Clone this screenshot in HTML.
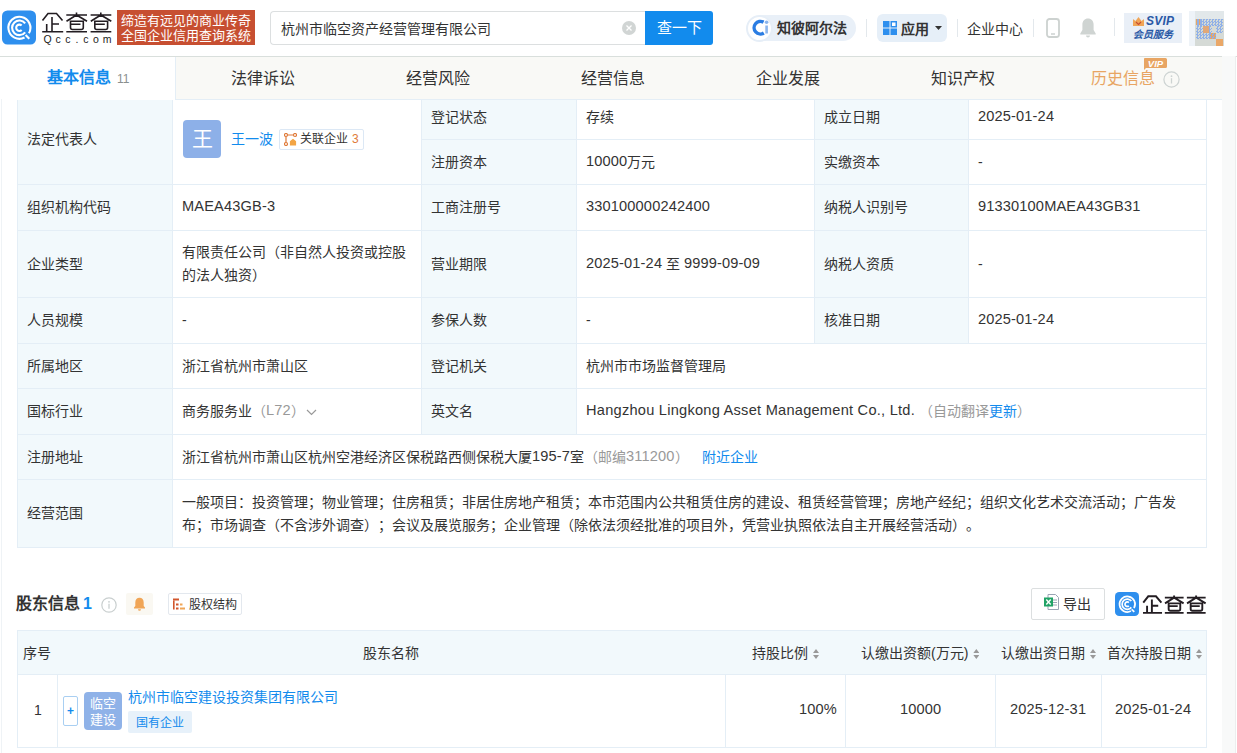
<!DOCTYPE html>
<html lang="zh-CN"><head><meta charset="utf-8">
<style>
*{box-sizing:border-box;margin:0;padding:0}
html,body{width:1237px;height:753px;overflow:hidden;background:#fff}
body{position:relative;font-family:"Liberation Sans",sans-serif;color:#333;font-size:14px;text-spacing-trim:space-all}
.a{position:absolute;white-space:nowrap}
.c{position:absolute;display:flex;align-items:center;padding-left:9px;white-space:nowrap;font-size:14px;line-height:23px;color:#333}
.n{letter-spacing:0.15px;font-size:14.6px;position:relative;top:-1px}
.rel .n{font-size:12px;top:0;letter-spacing:0}
.blue{color:#128bed}
.gray{color:#999}
.av{display:inline-block;width:38px;height:38px;border-radius:4px;background:#8db0e8;color:#fff;font-size:21px;line-height:38px;text-align:center;margin-left:1px}
.rel{display:inline-flex;align-items:center;height:21px;border:1px solid #dce8f5;border-radius:2px;padding:0 4px 0 4px;margin-left:6px;font-size:12px;color:#333;letter-spacing:0}
.srt{display:inline-block;width:6px;height:10px;margin-left:5px;vertical-align:-1px;background:linear-gradient(#999,#999) no-repeat;clip-path:polygon(50% 0,100% 40%,0 40%,0 60%,100% 60%,50% 100%,0 60%,0 40%);}
.tab{position:absolute;top:0;height:43px;width:175px;text-align:center;font-size:16px;line-height:43px;color:#333}
</style></head><body>
<!-- header -->
<div class="a" style="left:0;top:56px;width:1237px;height:1px;background:#d9dfdc"></div>
<svg class="a" style="left:2px;top:10px" width="34" height="35" viewBox="0 0 34 34"><rect width="34" height="34" rx="5.5" fill="#2e8fee"/><g fill="none" stroke="#fff" stroke-width="2.1"><path d="M22.56 27.01 A11 11 0 1 1 26.93 22.8"/><path d="M23.6 24.5L27.3 28.2"/><path d="M23.15 21.79 A7.3 7.3 0 1 1 23.15 12.81"/><path d="M19.66 19.56 A3.2 3.2 0 1 1 19.66 15.04"/></g></svg>
<svg class="a" style="left:40px;top:10px" width="75" height="35" viewBox="0 0 75 35"><g fill="none" stroke="#231d22" stroke-width="1.6"><path d="M2.5 10.5L8 3.5h8.5l6 7"/><path d="M12 7v15M12 14h7M6.7 14v8M2.2 21.8h21"/><path d="M26.3 5h20.7M36.5 2.5v3M36.5 5l-10 6.3M36.5 5l10.5 6.3M30.5 11.3h12.8v6.2a2 2 0 0 1-2 2h-8.8a2 2 0 0 1-2-2zM30.5 14.3h10M26.3 21.8h20.7"/><path d="M50.6 5h20.7M60.8 2.5v3M60.8 5l-10 6.3M60.8 5l10.5 6.3M54.8 11.3h12.8v6.2a2 2 0 0 1-2 2h-8.8a2 2 0 0 1-2-2zM54.8 14.3h10M50.6 21.8h20.7"/></g><text font-family="Liberation Sans" font-size="10.5" fill="#231d22" y="33"><tspan x="3.6">Q</tspan><tspan x="15.5">c</tspan><tspan x="25.3">c</tspan><tspan x="35.6">.</tspan><tspan x="43.2">c</tspan><tspan x="52.9">o</tspan><tspan x="62.8">m</tspan></text></svg>
<div class="a" style="left:117px;top:10px;width:138px;height:35px;background:#c74f31;color:#fff;font-size:13px;line-height:14.5px;padding:4px 0 0 4px;letter-spacing:0">缔造有远见的商业传奇<br>全国企业信用查询系统</div>
<div class="a" style="left:270px;top:11px;width:376px;height:34px;border:1px solid #dcdfe0;border-right:none;border-radius:4px 0 0 4px;background:#fff"></div>
<div class="a" style="left:281px;top:18px;font-size:14px;line-height:22px;color:#333">杭州市临空资产经营管理有限公司</div>
<svg class="a" style="left:622px;top:21px" width="14" height="14" viewBox="0 0 14 14"><circle cx="7" cy="7" r="7" fill="#d1d5d4"/><path d="M4.5 4.5l5 5M9.5 4.5l-5 5" stroke="#fff" stroke-width="1.3"/></svg>
<div class="a" style="left:645px;top:11px;width:68px;height:34px;background:#128bed;border-radius:0 3px 3px 0;color:#fff;font-size:15px;line-height:34px;text-align:center">查一下</div>
<div class="a" style="left:750px;top:15px;width:106px;height:26px;border-radius:13px;background:#e9f0f8"></div>
<div class="a" style="left:746px;top:15px;width:27px;height:27px;border-radius:50%;background:#fff;border:2px solid #e6eef7"></div>
<svg class="a" style="left:752px;top:19px" width="17" height="17" viewBox="0 0 17 17"><path d="M11.5 3.2A6.3 6.3 0 1 0 11.8 14" fill="none" stroke="#2b7de3" stroke-width="3.4"/><circle cx="14.6" cy="3.3" r="1.8" fill="#8cb5ec"/><path d="M14.6 6.5v8" stroke="#8cb5ec" stroke-width="2.6"/></svg>
<div class="a" style="left:777px;top:17px;font-size:14px;line-height:22px;font-weight:bold;color:#333">知彼阿尔法</div>
<div class="a" style="left:866px;top:19px;width:1px;height:18px;background:#e3e8ec"></div>
<div class="a" style="left:877px;top:14px;width:70px;height:28px;border-radius:6px;background:#e6eff8"></div>
<svg class="a" style="left:883px;top:21px" width="14" height="14" viewBox="0 0 14 14"><rect x="0" y="0" width="6.5" height="6.5" fill="#2e8fee"/><rect x="0" y="7.5" width="6.5" height="6.5" fill="#2e8fee"/><rect x="7.5" y="7.5" width="6.5" height="6.5" fill="#2e8fee"/><rect x="7.5" y="0" width="6.5" height="6.5" fill="#2e8fee"/><rect x="9" y="1.5" width="3.5" height="3.5" fill="#fff"/></svg>
<div class="a" style="left:901px;top:18px;font-size:14px;line-height:22px;font-weight:bold;color:#333">应用</div>
<svg class="a" style="left:935px;top:26px" width="7" height="4" viewBox="0 0 7 4"><path d="M0 0h7L3.5 4z" fill="#333"/></svg>
<div class="a" style="left:957px;top:19px;width:1px;height:18px;background:#e3e8ec"></div>
<div class="a" style="left:967px;top:18px;font-size:14px;line-height:22px;color:#333">企业中心</div>
<div class="a" style="left:1033px;top:19px;width:1px;height:18px;background:#e3e8ec"></div>
<svg class="a" style="left:1046px;top:18px" width="14" height="20" viewBox="0 0 14 20"><rect x="1" y="1" width="12" height="18" rx="2.5" fill="none" stroke="#cdd2d0" stroke-width="1.8"/><path d="M5 16h4" stroke="#cdd2d0" stroke-width="1.5"/></svg>
<svg class="a" style="left:1080px;top:18px" width="16" height="20" viewBox="0 0 16 20"><path d="M8 0.5c-3.3 0-5.6 2.6-5.6 6v5.5L0.3 15.5v1h15.4v-1L13.6 12V6.5C13.6 3.1 11.3 0.5 8 0.5z" fill="#cfd4d2"/><path d="M6 17.5h4a2 2 0 0 1-4 0z" fill="#cfd4d2"/></svg>
<div class="a" style="left:1114px;top:18px;width:1px;height:18px;background:#e3e8ec"></div>
<div class="a" style="left:1124px;top:13px;width:58px;height:30px;background:#e9eff7"></div>
<svg class="a" style="left:1133px;top:17px" width="11" height="9" viewBox="0 0 11 9"><path d="M0 2l2.5 2L5.5 0l3 4L11 2v7H0z" fill="#f0a557"/><path d="M3 5l2.5 2.5L8 5" stroke="#c74f31" stroke-width="1.2" fill="none"/></svg>
<div class="a" style="left:1146px;top:14px;font-size:12px;line-height:15px;font-weight:bold;font-style:italic;color:#2a58a6;letter-spacing:0.2px">SVIP</div>
<div class="a" style="left:1133px;top:28px;font-size:10px;line-height:13px;font-weight:bold;font-style:italic;color:#2a58a6">会员服务</div>
<div class="a" style="left:1189px;top:11px;width:6px;height:35px;background:#eef3f8"></div>
<div class="a" style="left:1195px;top:11px;width:29px;height:8px;background:#e2e8ea"></div>
<div class="a" style="left:1195px;top:19px;width:29px;height:27px;background:#d5dad6"></div>
<div class="a" style="left:1196px;top:19px;width:27px;height:7px;background:repeating-conic-gradient(#8fb0e8 0 25%,#d5dad6 0 50%) 0 0/3px 3px"></div>
<div class="a" style="left:1196px;top:26px;width:16px;height:13px;background:repeating-conic-gradient(#8fb0e8 0 25%,#d5dad6 0 50%) 0 0/3px 3px"></div>
<div class="a" style="left:1216px;top:26px;width:7px;height:7px;background:repeating-conic-gradient(#8fb0e8 0 25%,#d5dad6 0 50%) 0 0/3px 3px"></div>
<div class="a" style="left:1196px;top:19px;width:6px;height:6px;background:repeating-linear-gradient(90deg,#e8a563 0 1.5px,#8fb0e8 1.5px 3px)"></div>
<div class="a" style="left:1203px;top:26px;width:6px;height:7px;background:#e0a878"></div>
<div class="a" style="left:1210px;top:33px;width:6px;height:6px;background:repeating-conic-gradient(#e8a563 0 25%,#8fb0e8 0 50%) 0 0/3px 3px"></div>
<div class="a" style="left:1216px;top:39px;width:7px;height:7px;background:#eaa767"></div>
<!-- tabs -->
<div class="a" style="left:0;top:57px;width:1222px;height:43px;background:#f9f9f6;border-bottom:1px solid #e4eef6"></div>
<div class="a" style="left:0;top:57px;width:176px;height:43px;background:#fff;border-right:1px solid #e4eef6"></div>
<div class="a" style="left:47px;top:66px;font-size:16px;line-height:24px;font-weight:bold;color:#128bed">基本信息<span style="font-size:12px;font-weight:normal;color:#8a8f8f;margin-left:6px">11</span></div>
<div class="a" style="left:0;top:57px;width:1222px;height:43px">
  <div class="tab" style="left:175px">法律诉讼</div>
  <div class="tab" style="left:350px">经营风险</div>
  <div class="tab" style="left:525px">经营信息</div>
  <div class="tab" style="left:700px">企业发展</div>
  <div class="tab" style="left:875px">知识产权</div>
</div>
<div class="a" style="left:1091px;top:67px;font-size:16px;line-height:24px;color:#e8a563">历史信息</div>
<svg class="a" style="left:1143px;top:58px" width="24" height="12" viewBox="0 0 24 12"><path d="M1.5 0h21a1.5 1.5 0 0 1 1.5 1.5v7a1.5 1.5 0 0 1-1.5 1.5H3L1 12V1.5A1.5 1.5 0 0 1 1.5 0z" fill="#e8a563"/><text x="12.5" y="8.6" font-family="Liberation Sans" font-size="9.5" font-weight="bold" font-style="italic" fill="#fff" text-anchor="middle">VIP</text></svg>
<svg class="a" style="left:1163px;top:71px" width="17" height="17" viewBox="0 0 17 17"><circle cx="8.5" cy="8.5" r="7.6" fill="none" stroke="#cdd3d2" stroke-width="1.2"/><circle cx="8.5" cy="5.2" r="0.9" fill="#cdd3d2"/><path d="M8.5 7.2v5.3" stroke="#cdd3d2" stroke-width="1.3"/></svg>
<!-- side -->
<div class="a" style="left:1px;top:99px;width:1px;height:654px;background:#eff3f6"></div>
<div class="a" style="left:1222px;top:56px;width:13px;height:697px;background:#f8f9f9"></div>
<div class="a" style="left:1235px;top:56px;width:1px;height:697px;background:#eceeee"></div>
<div class="a" style="left:17px;top:100px;width:155px;height:447px;background:#f2f9fc"></div>
<div class="a" style="left:421px;top:100px;width:155px;height:334px;background:#f2f9fc"></div>
<div class="a" style="left:814px;top:100px;width:154px;height:243px;background:#f2f9fc"></div>
<div class="a" style="left:421px;top:139px;width:786px;height:1px;background:#e4eef6"></div>
<div class="a" style="left:17px;top:184px;width:1190px;height:1px;background:#e4eef6"></div>
<div class="a" style="left:17px;top:230px;width:1190px;height:1px;background:#e4eef6"></div>
<div class="a" style="left:17px;top:297px;width:1190px;height:1px;background:#e4eef6"></div>
<div class="a" style="left:17px;top:343px;width:1190px;height:1px;background:#e4eef6"></div>
<div class="a" style="left:17px;top:388px;width:1190px;height:1px;background:#e4eef6"></div>
<div class="a" style="left:17px;top:434px;width:1190px;height:1px;background:#e4eef6"></div>
<div class="a" style="left:17px;top:479px;width:1190px;height:1px;background:#e4eef6"></div>
<div class="a" style="left:17px;top:547px;width:1190px;height:1px;background:#e4eef6"></div>
<div class="a" style="left:17px;top:100px;width:1px;height:448px;background:#e4eef6"></div>
<div class="a" style="left:1206px;top:100px;width:1px;height:448px;background:#e4eef6"></div>
<div class="a" style="left:172px;top:100px;width:1px;height:448px;background:#e4eef6"></div>
<div class="a" style="left:421px;top:99px;width:1px;height:336px;background:#e4eef6"></div>
<div class="a" style="left:576px;top:99px;width:1px;height:336px;background:#e4eef6"></div>
<div class="a" style="left:814px;top:99px;width:1px;height:245px;background:#e4eef6"></div>
<div class="a" style="left:968px;top:99px;width:1px;height:245px;background:#e4eef6"></div>
<div class="c" style="left:18px;top:100px;width:154px;height:84px;padding-bottom:6px"><div>法定代表人</div></div>
<div class="c" style="left:173px;top:100px;width:248px;height:84px;padding-bottom:6px"><span class="av">王</span><span class="blue" style="margin-left:10px">王一波</span><span class="rel"><svg width="13" height="13" viewBox="0 0 13 13" style="margin-right:3px"><g fill="none" stroke="#e07b3a" stroke-width="1.2"><circle cx="2" cy="2" r="1.5"/><circle cx="11" cy="2" r="1.5"/><circle cx="2" cy="11" r="1.5"/><path d="M3.5 2h6M2 3.5v6"/><path d="M6.5 12V8.5l2.5-2 2.5 2V12z" fill="#f3a545" stroke="#f3a545"/></g></svg>关联企业<span style="color:#e07b3a;margin-left:4px"><span class="n">3</span></span></span></div>
<div class="c" style="left:422px;top:100px;width:154px;height:39px;align-items:flex-start;padding-top:6px"><div>登记状态</div></div>
<div class="c" style="left:577px;top:100px;width:237px;height:39px;align-items:flex-start;padding-top:6px"><div>存续</div></div>
<div class="c" style="left:815px;top:100px;width:153px;height:39px;align-items:flex-start;padding-top:6px"><div>成立日期</div></div>
<div class="c" style="left:969px;top:100px;width:237px;height:39px;align-items:flex-start;padding-top:6px"><div><span class="n">2025-01-24</span></div></div>
<div class="c" style="left:422px;top:140px;width:154px;height:44px;"><div>注册资本</div></div>
<div class="c" style="left:577px;top:140px;width:237px;height:44px;"><div><span class="n">10000</span>万元</div></div>
<div class="c" style="left:815px;top:140px;width:153px;height:44px;"><div>实缴资本</div></div>
<div class="c" style="left:969px;top:140px;width:237px;height:44px;"><div>-</div></div>
<div class="c" style="left:18px;top:185px;width:154px;height:45px;"><div>组织机构代码</div></div>
<div class="c" style="left:173px;top:185px;width:248px;height:45px;"><div><span class="n">MAEA43GB-3</span></div></div>
<div class="c" style="left:422px;top:185px;width:154px;height:45px;"><div>工商注册号</div></div>
<div class="c" style="left:577px;top:185px;width:237px;height:45px;"><div><span class="n">330100000242400</span></div></div>
<div class="c" style="left:815px;top:185px;width:153px;height:45px;"><div>纳税人识别号</div></div>
<div class="c" style="left:969px;top:185px;width:237px;height:45px;"><div><span class="n">91330100MAEA43GB31</span></div></div>
<div class="c" style="left:18px;top:231px;width:154px;height:66px;"><div>企业类型</div></div>
<div class="c" style="left:173px;top:231px;width:248px;height:66px;white-space:normal"><div>有限责任公司（非自然人投资或控股<br>的法人独资）</div></div>
<div class="c" style="left:422px;top:231px;width:154px;height:66px;"><div>营业期限</div></div>
<div class="c" style="left:577px;top:231px;width:237px;height:66px;"><div><span class="n">2025-01-24</span> 至 <span class="n">9999-09-09</span></div></div>
<div class="c" style="left:815px;top:231px;width:153px;height:66px;"><div>纳税人资质</div></div>
<div class="c" style="left:969px;top:231px;width:237px;height:66px;"><div>-</div></div>
<div class="c" style="left:18px;top:298px;width:154px;height:45px;"><div>人员规模</div></div>
<div class="c" style="left:173px;top:298px;width:248px;height:45px;"><div>-</div></div>
<div class="c" style="left:422px;top:298px;width:154px;height:45px;"><div>参保人数</div></div>
<div class="c" style="left:577px;top:298px;width:237px;height:45px;"><div>-</div></div>
<div class="c" style="left:815px;top:298px;width:153px;height:45px;"><div>核准日期</div></div>
<div class="c" style="left:969px;top:298px;width:237px;height:45px;"><div><span class="n">2025-01-24</span></div></div>
<div class="c" style="left:18px;top:344px;width:154px;height:44px;"><div>所属地区</div></div>
<div class="c" style="left:173px;top:344px;width:248px;height:44px;"><div>浙江省杭州市萧山区</div></div>
<div class="c" style="left:422px;top:344px;width:154px;height:44px;"><div>登记机关</div></div>
<div class="c" style="left:577px;top:344px;width:629px;height:44px;"><div>杭州市市场监督管理局</div></div>
<div class="c" style="left:18px;top:389px;width:154px;height:45px;"><div>国标行业</div></div>
<div class="c" style="left:173px;top:389px;width:248px;height:45px;"><div>商务服务业<span class="gray">（<span class="n">L72</span>）</span><svg width="11" height="7" viewBox="0 0 11 7" style="margin-left:1px"><path d="M1 1l4.5 4.5 4.5-4.5" fill="none" stroke="#999" stroke-width="1.2"/></svg></div></div>
<div class="c" style="left:422px;top:389px;width:154px;height:45px;"><div>英文名</div></div>
<div class="c" style="left:577px;top:389px;width:629px;height:45px;"><div><span class="n" style="letter-spacing:0.25px">Hangzhou Lingkong Asset Management Co., Ltd.</span> <span class="gray">（自动翻译</span><span class="blue">更新</span><span class="gray">）</span></div></div>
<div class="c" style="left:18px;top:435px;width:154px;height:44px;"><div>注册地址</div></div>
<div class="c" style="left:173px;top:435px;width:1033px;height:44px;"><div>浙江省杭州市萧山区杭州空港经济区保税路西侧保税大厦<span class="n">195-7</span>室<span class="gray">（邮编<span class="n">311200</span>）</span><span class="blue" style="margin-left:13px">附近企业</span></div></div>
<div class="c" style="left:18px;top:480px;width:154px;height:67px;"><div>经营范围</div></div>
<div class="c" style="left:173px;top:480px;width:1033px;height:67px;"><div>一般项目：投资管理；物业管理；住房租赁；非居住房地产租赁；本市范围内公共租赁住房的建设、租赁经营管理；房地产经纪；组织文化艺术交流活动；广告发<br>布；市场调查（不含涉外调查）；会议及展览服务；企业管理（除依法须经批准的项目外，凭营业执照依法自主开展经营活动）。</div></div>
<!-- shareholder section -->
<div class="a" style="left:16px;top:592px;font-size:16px;line-height:24px;font-weight:bold;color:#333">股东信息<span style="color:#128bed;margin-left:3px">1</span></div>
<svg class="a" style="left:101px;top:597px" width="16" height="16" viewBox="0 0 16 16"><circle cx="8" cy="8" r="7.2" fill="none" stroke="#c9cfcf" stroke-width="1.2"/><circle cx="8" cy="4.8" r="0.9" fill="#c9cfcf"/><path d="M8 6.8v5" stroke="#c9cfcf" stroke-width="1.3"/></svg>
<div class="a" style="left:126px;top:593px;width:27px;height:22px;background:#faf8f2;border-radius:2px"></div>
<svg class="a" style="left:133px;top:597px" width="13" height="14" viewBox="0 0 13 14"><path d="M6.5 0.8c-2.6 0-4.2 2-4.2 4.6v3.6L1 10.6v0.8h11v-0.8L10.7 9V5.4c0-2.6-1.6-4.6-4.2-4.6z" fill="#f0a557"/><path d="M5 12.2h3a1.5 1.5 0 0 1-3 0z" fill="#f0a557"/></svg>
<div class="a" style="left:168px;top:593px;width:74px;height:22px;border:1px solid #e3e8ee;border-radius:2px"></div>
<svg class="a" style="left:173px;top:598px" width="12" height="12" viewBox="0 0 12 12"><g fill="#d2562d"><rect x="0" y="0.5" width="6" height="2"/><rect x="0" y="2.5" width="1.6" height="9"/><rect x="3" y="5.5" width="2.5" height="2"/><rect x="7" y="5.5" width="2.5" height="2" fill="#f0a557"/><rect x="3" y="9.5" width="2.5" height="2"/><rect x="7" y="9.5" width="5" height="2" fill="#f0a557"/></g></svg>
<div class="a" style="left:189px;top:594px;font-size:12px;line-height:23px;color:#333">股权结构</div>

<div class="a" style="left:1031px;top:588px;width:74px;height:32px;border:1px solid #dcdfe0;border-radius:2px;background:#fff"></div>
<svg class="a" style="left:1044px;top:594px" width="15" height="16" viewBox="0 0 15 16"><path d="M4 0.5h7.5l3 3v12h-10.5z" fill="#fff" stroke="#9aa4b4" stroke-width="1"/><g stroke="#9aa4b4" stroke-width="1"><path d="M9 6h4M9 8.5h4M9 11h4"/></g><rect x="0" y="3.5" width="9" height="9" fill="#21a366"/><path d="M2.3 5.5l4.4 5M6.7 5.5l-4.4 5" stroke="#fff" stroke-width="1.4"/></svg>
<div class="a" style="left:1063px;top:593px;font-size:14px;line-height:22px;color:#333">导出</div>
<svg class="a" style="left:1115px;top:592px" width="24" height="24" viewBox="0 0 34 34"><rect width="34" height="34" rx="6" fill="#2e8fee"/><g fill="none" stroke="#fff" stroke-width="2.4"><path d="M22.56 27.01 A11 11 0 1 1 26.93 22.8"/><path d="M23.6 24.5L27.3 28.2"/><path d="M23.15 21.79 A7.3 7.3 0 1 1 23.15 12.81"/><path d="M19.66 19.56 A3.2 3.2 0 1 1 19.66 15.04"/></g></svg>
<svg class="a" style="left:1141px;top:593px" width="68" height="22" viewBox="0 0 75 24"><g fill="none" stroke="#231d22" stroke-width="2.1"><path d="M2.5 10.5L8 3.5h8.5l6 7"/><path d="M12 7v15M12 14h7M6.7 14v8M2.2 21.8h21"/><path d="M26.3 5h20.7M36.5 2.5v3M36.5 5l-10 6.3M36.5 5l10.5 6.3M30.5 11.3h12.8v6.2a2 2 0 0 1-2 2h-8.8a2 2 0 0 1-2-2zM30.5 14.3h10M26.3 21.8h20.7"/><path d="M50.6 5h20.7M60.8 2.5v3M60.8 5l-10 6.3M60.8 5l10.5 6.3M54.8 11.3h12.8v6.2a2 2 0 0 1-2 2h-8.8a2 2 0 0 1-2-2zM54.8 14.3h10M50.6 21.8h20.7"/></g></svg>

<div class="a" style="left:17px;top:630px;width:1190px;height:45px;background:#f2f9fc;border:1px solid #e4eef6"></div>
<div class="a" style="left:17px;top:674px;width:1190px;height:74px;border:1px solid #e4eef6;border-top:none"></div>
<div class="a" style="left:57px;top:675px;width:1px;height:72px;background:#e4eef6"></div>
<div class="a" style="left:725px;top:675px;width:1px;height:72px;background:#e4eef6"></div>
<div class="a" style="left:845px;top:675px;width:1px;height:72px;background:#e4eef6"></div>
<div class="a" style="left:995px;top:675px;width:1px;height:72px;background:#e4eef6"></div>
<div class="a" style="left:1101px;top:675px;width:1px;height:72px;background:#e4eef6"></div>
<div class="a" style="left:23px;top:642px;font-size:14px;line-height:22px">序号</div>
<div class="a" style="left:363px;top:642px;font-size:14px;line-height:22px">股东名称</div>
<div class="a" style="left:752px;top:642px;font-size:14px;line-height:22px">持股比例<i class="srt"></i></div>
<div class="a" style="left:861px;top:642px;font-size:14px;line-height:22px">认缴出资额(万元)<i class="srt"></i></div>
<div class="a" style="left:1001px;top:642px;font-size:14px;line-height:22px">认缴出资日期<i class="srt"></i></div>
<div class="a" style="left:1107px;top:642px;font-size:14px;line-height:22px">首次持股日期<i class="srt"></i></div>
<div class="a" style="left:34px;top:699px;font-size:14px;line-height:22px">1</div>
<div class="a" style="left:63px;top:696px;width:15px;height:30px;border:1px solid #a9cff2;border-radius:2px;color:#128bed;font-size:12px;font-weight:bold;line-height:28px;text-align:center">+</div>
<div class="a" style="left:84px;top:692px;width:38px;height:38px;border-radius:4px;background:#8fb2e8;color:#fff;font-size:13px;line-height:15.5px;text-align:center;padding-top:4px;white-space:normal">临空<br>建设</div>
<div class="a blue" style="left:128px;top:686px;font-size:14px;line-height:22px">杭州市临空建设投资集团有限公司</div>
<div class="a" style="left:128px;top:711px;width:64px;height:22px;background:#e7f1fa;border-radius:2px;color:#128bed;font-size:12px;line-height:25px;text-align:center">国有企业</div>
<div class="a" style="left:799px;top:699px;font-size:14px;line-height:22px"><span class="n">100%</span></div>
<div class="a" style="left:900px;top:699px;font-size:14px;line-height:22px"><span class="n">10000</span></div>
<div class="a" style="left:1010px;top:699px;font-size:14px;line-height:22px"><span class="n">2025-12-31</span></div>
<div class="a" style="left:1115px;top:699px;font-size:14px;line-height:22px"><span class="n">2025-01-24</span></div>
</body></html>
